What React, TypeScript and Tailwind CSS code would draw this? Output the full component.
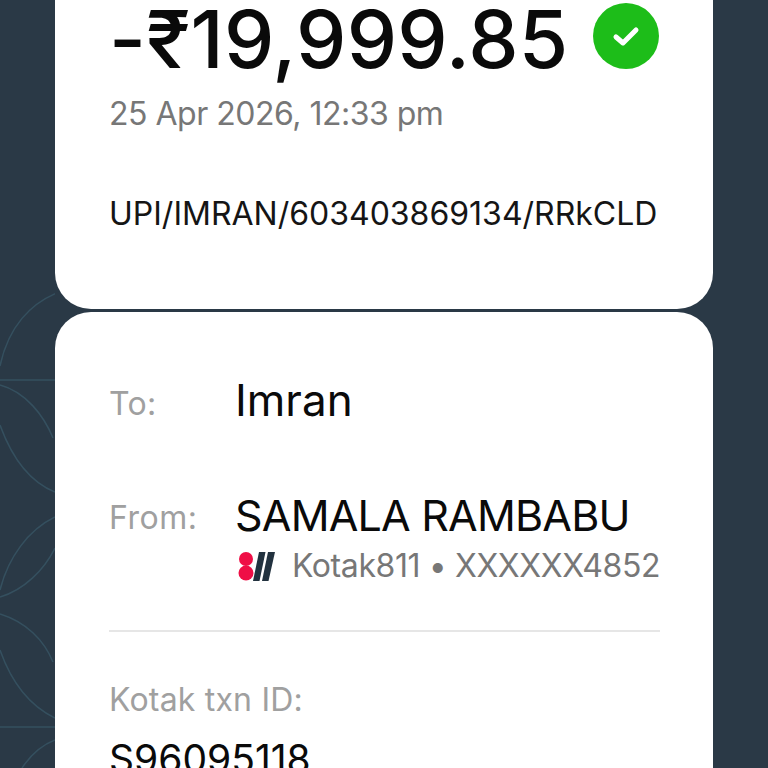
import React from "react";

const Pattern = () => (
  <svg className="absolute left-0 top-0" width="55" height="768" viewBox="0 0 55 768" fill="none" stroke="#35505f" strokeWidth="1.5">
    <path d="M0 366C8 328 30 302 62 291" />
    <path d="M0 380H55" />
    <path d="M0 385C26 392 44 416 53 438" />
    <path d="M0 425C12 458 30 482 55 492" />
    <path d="M0 590C8 558 28 530 55 517" />
    <path d="M0 597C24 590 44 570 55 548" />
    <path d="M0 614C26 622 44 640 53 662" />
    <path d="M0 650C12 684 30 706 55 718" />
    <path d="M0 727H55" />
    <path d="M22 768C30 756 42 745 55 740" />
  </svg>
);

const Kotak = () => (
  <svg width="37" height="31" viewBox="0 0 37 31" className="shrink-0">
    <circle cx="8" cy="8" r="7" fill="#ef0f46" />
    <circle cx="8" cy="22" r="7.5" fill="#ef0f46" />
    <path d="M21 1H27.5L21.5 30H15Z" fill="#22323f" />
    <path d="M30 1H37L30.5 30H24Z" fill="#22323f" />
  </svg>
);

export default function App() {
  return (
    <div className="relative h-[768px] w-[768px] overflow-hidden bg-[#2a3946] font-['Inter',sans-serif]">
      <Pattern />
      <div className="relative flex flex-col gap-[3px] pl-[55px] pr-[55px]">
        <div className="h-[309px] rounded-b-[36px] bg-white pl-[54px] pr-[54px]">
          <div className="flex h-[72px] items-start gap-[25px]">
            <div className="pt-[3px] text-[80px] leading-[72px] tracking-[0.2px] font-medium text-[#0a0a0a] whitespace-nowrap">-₹19,999.85</div>
            <div className="mt-[3px] flex h-[66px] w-[66px] shrink-0 items-center justify-center rounded-full bg-[#1dbd19]">
              <svg width="28" height="28" viewBox="0 0 28 28" fill="none" stroke="white" strokeWidth="5" strokeLinecap="round" strokeLinejoin="round">
                <path d="M4 15L11 21L24 8" />
              </svg>
            </div>
          </div>
          <div className="mt-[22px] text-[32px] leading-[40px] tracking-[-0.5px] text-[#777777] whitespace-nowrap">25 Apr 2026, 12:33 pm</div>
          <div className="mt-[60px] text-[32px] leading-[40px] text-[#151515] whitespace-nowrap">UPI/IMRAN/603403869134/RRkCLD</div>
        </div>
        <div className="h-[500px] rounded-t-[36px] bg-white pl-[54px] pr-[53px] pt-[63px]">
          <div className="flex items-start">
            <div className="w-[126px] pt-[4px] text-[32px] leading-[50px] tracking-[0.3px] text-[#a0a0a0]">To:</div>
            <div className="text-[44px] leading-[50px] text-[#0a0a0a]">Imran</div>
          </div>
          <div className="mt-[61px] flex items-start">
            <div className="w-[126px] pt-[3px] text-[32px] leading-[50px] tracking-[0.5px] text-[#a0a0a0]">From:</div>
            <div className="text-[43px] leading-[50px] tracking-[-0.8px] text-[#0a0a0a] whitespace-nowrap">SAMALA RAMBABU</div>
          </div>
          <div className="ml-[129px] mt-[3px] flex items-center gap-[17px]">
            <Kotak />
            <div className="text-[32px] leading-[40px] tracking-[-0.4px] text-[#777777] whitespace-nowrap">Kotak811 • XXXXXX4852</div>
          </div>
          <div className="mt-[44px] h-[2px] bg-[#e6e6e6]" />
          <div className="mt-[48px] text-[32px] leading-[40px] tracking-[0.2px] text-[#a0a0a0] whitespace-nowrap">Kotak txn ID:</div>
          <div className="mt-[17px] text-[39px] leading-[44px] text-[#0a0a0a] whitespace-nowrap">S96095118</div>
        </div>
      </div>
    </div>
  );
}
